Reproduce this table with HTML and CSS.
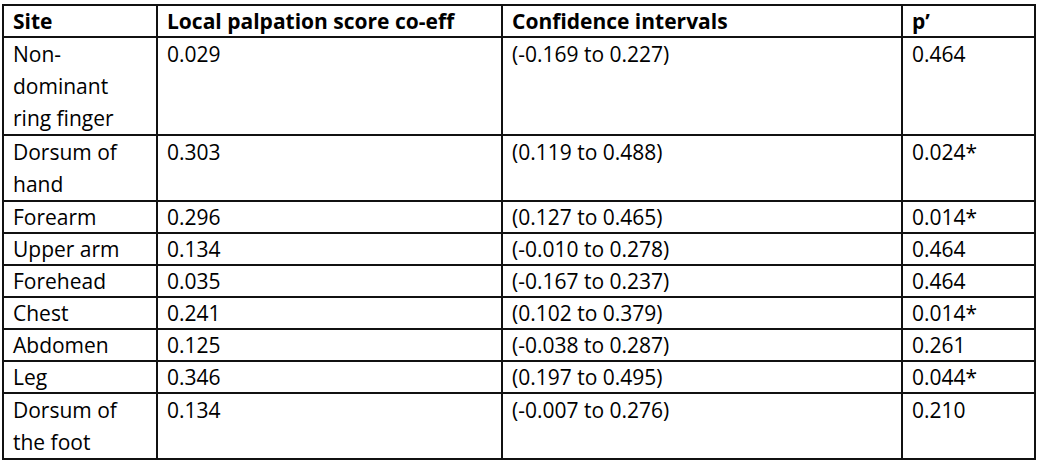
FILE: index.html
```html
<!DOCTYPE html>
<html>
<head>
<meta charset="utf-8">
<link rel="stylesheet" href="styles.css">
</head>
<body>
<table class="data">
  <colgroup>
    <col class="c-site">
    <col class="c-coef">
    <col class="c-ci">
    <col class="c-p">
  </colgroup>
  <thead>
    <tr><th>Site</th><th>Local palpation score co-eff</th><th>Confidence intervals</th><th>p’</th></tr>
  </thead>
  <tbody>
    <tr class="multi"><td>Non-dominant ring finger</td><td>0.029</td><td>(-0.169 to 0.227)</td><td>0.464</td></tr>
    <tr class="multi"><td>Dorsum of hand</td><td>0.303</td><td>(0.119 to 0.488)</td><td>0.024*</td></tr>
    <tr><td>Forearm</td><td>0.296</td><td>(0.127 to 0.465)</td><td>0.014*</td></tr>
    <tr><td>Upper arm</td><td>0.134</td><td>(-0.010 to 0.278)</td><td>0.464</td></tr>
    <tr><td>Forehead</td><td>0.035</td><td>(-0.167 to 0.237)</td><td>0.464</td></tr>
    <tr><td>Chest</td><td>0.241</td><td>(0.102 to 0.379)</td><td>0.014*</td></tr>
    <tr><td>Abdomen</td><td>0.125</td><td>(-0.038 to 0.287)</td><td>0.261</td></tr>
    <tr><td>Leg</td><td>0.346</td><td>(0.197 to 0.495)</td><td>0.044*</td></tr>
    <tr class="multi"><td>Dorsum of the foot</td><td>0.134</td><td>(-0.007 to 0.276)</td><td>0.210</td></tr>
  </tbody>
</table>
</body>
</html>
```
FILE: styles.css
```css
html, body {
  margin: 0;
  padding: 0;
  background: #fff;
}
body {
  padding: 4px 0 0 2px;
  font-family: "Open Sans", "Liberation Sans", sans-serif;
  color: #000;
}
.data {
  border-collapse: collapse;
  table-layout: fixed;
  width: 1032px;
  font-size: 21px;
}
.c-site { width: 154px; }
.c-coef { width: 345px; }
.c-ci { width: 400px; }
.c-p { width: 133px; }
.data th,
.data td {
  border: 2px solid #111;
  padding: 0 12px 0 9px;
  line-height: 30px;
  text-align: left;
  vertical-align: top;
}
.data th {
  font-weight: 700;
}
.data tr.multi td {
  line-height: 32px;
}
```
